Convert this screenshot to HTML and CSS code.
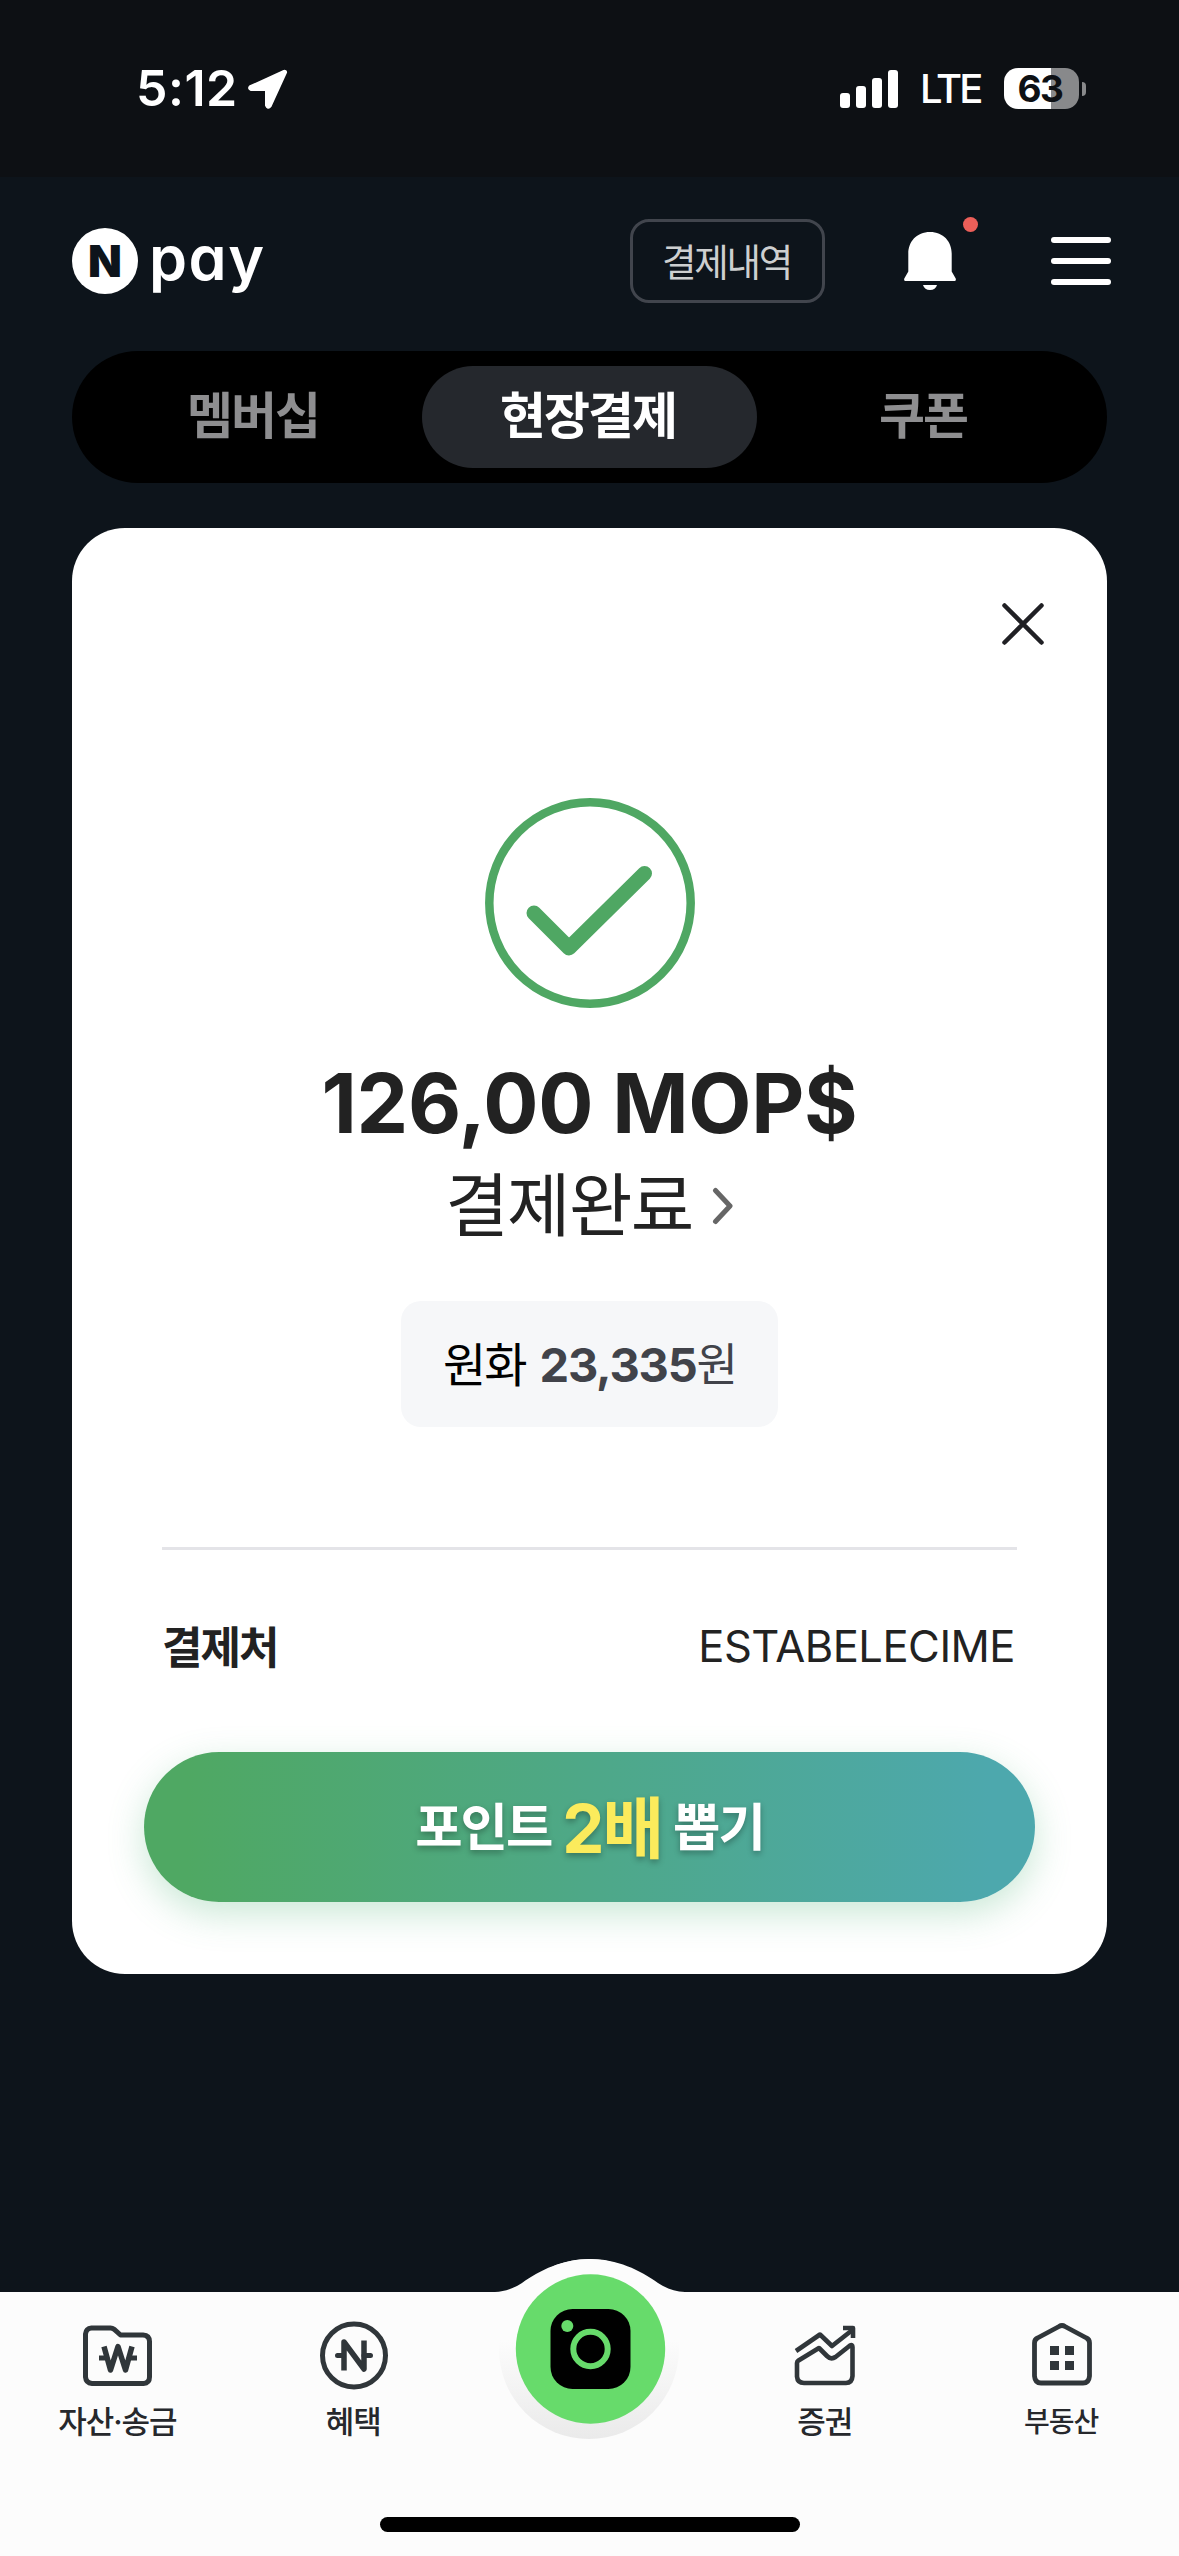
FILE: index.html
```html
<!DOCTYPE html>
<html lang="ko">
<head>
<meta charset="utf-8">
<title>N pay</title>
<link rel="stylesheet" href="styles.css">
</head>
<body>
<div class="screen">
  <div class="status">
    <span class="time">5:12</span>
    <svg class="loc" width="42" height="42" viewBox="0 0 42 42"><path d="M38.500 4.300 4.800 19.600Q4.300 20.200 5.500 20.600H21.500V37.200Q22.200 39 23.200 37.600Z" fill="#fff" stroke="#fff" stroke-width="5" stroke-linejoin="round"/></svg>
    <svg class="signal" width="58" height="38" viewBox="0 0 58 38" fill="#fff"><rect x="0" y="23" width="10" height="15" rx="3"/><rect x="16" y="16" width="10" height="22" rx="3"/><rect x="32" y="8" width="10" height="30" rx="3"/><rect x="48" y="0" width="10" height="38" rx="3"/></svg>
    <span class="lte">LTE</span>
    <span class="battery">63</span>
    <span class="nub"></span>
  </div>

  <header class="top">
    <span class="mark">N</span>
    <span class="pay">pay</span>
    <button class="history"><span>결제내역</span></button>
    <span class="bell">
      <svg width="52" height="59" viewBox="0 0 52 59" fill="#fff"><path d="M26 0C12.500 0 4.300 9.800 4.300 21.500V39.500L.3 46.500C-.2 48 .4 49 2 49H50C51.600 49 52.200 48 51.700 46.500L47.700 39.500V21.500C47.700 9.800 39.500 0 26 0Z"/><path d="M19 53H33Q31.500 58 26 58Q20.500 58 19 53Z"/></svg>
      <span class="dot"></span>
    </span>
    <span class="menu"><i></i><i></i><i></i></span>
  </header>

  <nav class="tabs">
    <span class="tab">멤버십</span>
    <span class="tab active">현장결제</span>
    <span class="tab">쿠폰</span>
  </nav>

  <main class="card">
    <svg class="close" width="42" height="42" viewBox="0 0 42 42" fill="none" stroke="#202024" stroke-width="4.500" stroke-linecap="round"><path d="M2.500 2.500 39.500 39.500M39.500 2.500 2.500 39.500"/></svg>
    <svg class="check" width="210" height="210" viewBox="0 0 210 210" fill="none" stroke="#4fa763"><circle cx="105" cy="105" r="100.700" stroke-width="8.500"/><path d="M49 115 84 150 159.500 75.500" stroke-width="15" stroke-linecap="round" stroke-linejoin="round"/></svg>
    <div class="amount">126,00 MOP$</div>
    <div class="done"><span>결제완료</span><svg width="22" height="40" viewBox="0 0 22 40" fill="none" stroke="#666" stroke-width="5" stroke-linecap="round" stroke-linejoin="round"><path d="M3.500 4.500 18 20 3.500 35.500"/></svg></div>
    <div class="won"><span class="won-label">원화</span><b>23,335</b><span class="unit">원</span></div>
    <div class="row"><b>결제처</b><span>ESTABELECIME</span></div>
    <button class="draw"><span>포인트</span><em>2배</em><span>뽑기</span></button>
  </main>

  <footer class="bottom">
    <svg class="bump" width="210" height="36" viewBox="0 0 210 36"><path d="M10 34C20 34 29 30 37 25C55 12 78 1 105 1C132 1 155 12 173 25C181 30 190 34 200 34V36H10Z" fill="#fcfcfc"/></svg>
    <a class="item">
      <svg width="72" height="72" viewBox="0 0 72 72" fill="none" stroke="#30363a" stroke-width="5" stroke-linejoin="round"><path d="M9.500 8H28.500Q30.500 8 32 9.200L38.500 15H61Q67.500 15.500 67.500 21.500V57Q67.500 63 61.500 63.500H10Q4 63 3.500 57V14Q4 8.500 9.500 8Z"/><path d="M22 26.500 28.500 50 36 26.500 43.500 50 50 26.500" stroke-width="5.500"/><path d="M17 38H23M48 38H55" stroke-width="5"/></svg>
      <span>자산·송금</span>
    </a>
    <a class="item">
      <svg width="72" height="72" viewBox="0 0 72 72" fill="none" stroke="#30363a" stroke-width="5" stroke-linejoin="round"><circle cx="36" cy="35.500" r="31.500"/><path d="M26 50.500V22L46 49V20.500" stroke-width="5.500"/><path d="M19.500 35.500H25M46 35.500H52.500" stroke-linecap="round"/></svg>
      <span>혜택</span>
    </a>
    <a class="scan">
      <svg width="180" height="180" viewBox="0 0 180 180"><circle cx="91.500" cy="90" r="74.700" fill="#67db6b"/><rect x="51.500" y="50" width="80" height="80" rx="22"/><circle cx="91.500" cy="90" r="17.200" fill="none" stroke="#67db6b" stroke-width="6"/><circle cx="68.300" cy="67" r="6" fill="#67db6b"/></svg>
    </a>
    <a class="item">
      <svg width="72" height="72" viewBox="0 0 72 72" fill="none" stroke="#30363a" stroke-width="4.600" stroke-linejoin="round"><path d="M7 31 31 14.500 43 26 64 9.500"/><path d="M54 8H64V18"/><path d="M8 43Q8 41.500 9.500 40.500L30 28L38 36Q42 40 46.500 37L61 25.500Q63.500 24 63.500 27V56Q63 63 57 63H15Q8.500 63 8 56.500Z"/></svg>
      <span>증권</span>
    </a>
    <a class="item">
      <svg width="72" height="72" viewBox="-1 0 72 72" fill="none" stroke="#30363a" stroke-width="4.800" stroke-linejoin="round"><path d="M33 6.500Q36 4.500 39 6.500L60.500 18Q63.500 19.500 63.500 23V56Q63 63 57 63H15Q9 63 8.500 56V23Q8.500 19.500 11.500 18Z"/><path d="M24 26h9v9h-9ZM39 26h9v9h-9ZM24 41h9v9h-9ZM39 41h9v9h-9Z" fill="#30363a" stroke="none"/></svg>
      <span class="small">부동산</span>
    </a>
    <span class="home"></span>
  </footer>
</div>
</body>
</html>
```
FILE: styles.css
```css
* { box-sizing: border-box; }
body {
  margin: 0;
  background: #0d141b;
  font-family: Inter, "Noto Sans CJK KR", sans-serif;
}
button { font-family: inherit; padding: 0; }
svg { display: block; flex: none; }
.screen {
  width: 1179px;
  height: 2556px;
  display: flex;
  flex-direction: column;
  overflow: hidden;
}

/* status bar */
.status {
  height: 177px;
  background: #0d1014;
  color: #fff;
  display: flex;
  align-items: center;
  padding-left: 136px;
}
.time { width: 110px; padding-bottom: 2px; font-size: 50px; font-weight: 600; letter-spacing: 0.5px; white-space: nowrap; }
.loc { margin-right: 552px; }
.signal { margin-right: 22px; }
.lte { width: 84px; font-size: 40px; font-weight: 500; letter-spacing: -2.800px; white-space: nowrap; }
.battery {
  width: 75px;
  height: 41px;
  border-radius: 14px;
  background: linear-gradient(90deg, #fff 47px, #88898b 47px);
  color: #0d1014;
  font-size: 37px;
  font-weight: 700;
  letter-spacing: -1.500px;
  line-height: 41px;
  padding-right: 3px;
  text-align: center;
}
.nub { width: 4px; height: 14px; margin-left: 3px; border-radius: 0 4px 4px 0; background: #88898b; }

/* header */
.top {
  height: 174px;
  padding: 0 68px 6px 72px;
  display: flex;
  align-items: center;
  color: #fff;
}
.mark {
  width: 66px;
  height: 66px;
  border-radius: 50%;
  background: #fff;
  color: #0d141b;
  font-size: 44px;
  font-weight: 900;
  line-height: 66px;
  text-align: center;
}
.pay {
  margin-left: 11px;
  font-size: 61px;
  font-weight: 600;
  letter-spacing: 1.500px;
  line-height: 64px;
  height: 70px;
  font-feature-settings: "cv11";
}
.history {
  width: 195px;
  height: 84px;
  margin-left: auto;
  border: 3px solid #41454d;
  border-radius: 19px;
  background: none;
  color: #cdcfd0;
  font-size: 37.500px;
  letter-spacing: -2.300px;
}
.history span { display: block; padding: 0 2px 4px 0; }
.bell { position: relative; margin: 0 95px 0 79px; }
.dot {
  position: absolute;
  left: 59px;
  top: -15px;
  width: 15px;
  height: 15px;
  border-radius: 50%;
  background: #ec5f59;
}
.menu { width: 60px; display: flex; flex-direction: column; gap: 15px; }
.menu i { height: 6px; border-radius: 3px; background: #fff; }

/* tabs */
.tabs {
  height: 132px;
  margin: 0 72px;
  padding: 15px;
  border-radius: 66px;
  background: #000;
  display: grid;
  grid-template-columns: repeat(3, 1fr);
}
.tab {
  padding-right: 3px;
  border-radius: 51px;
  color: #8e8e90;
  font-size: 50px;
  font-weight: 700;
  line-height: 101px;
  letter-spacing: -2px;
  text-align: center;
}
.active { background: #25282d; color: #fff; }

/* result card */
.card {
  height: 1446px;
  margin: 45px 72px 0;
  border-radius: 53px;
  background: #fff;
  color: #222;
  display: flex;
  flex-direction: column;
  align-items: center;
}
.close { align-self: flex-end; margin: 75px 63px 153px 0; }
.amount { margin-top: 46px; font-size: 82px; font-weight: 700; line-height: 100px; letter-spacing: -0.3px; white-space: nowrap; }
.done { display: flex; align-items: center; gap: 19px; height: 104px; }
.done span { font-size: 69px; line-height: 104px; letter-spacing: -1.600px; }
.won {
  width: 377px;
  height: 126px;
  margin-top: 43px;
  border-radius: 20px;
  background: #f6f7f9;
  display: flex;
  align-items: center;
  justify-content: center;
  font-size: 47px;
  color: #41434a;
  letter-spacing: -2px;
}
.won-label { color: #000; margin-right: 14px; padding-bottom: 5px; }
.won b { letter-spacing: -1.200px; }
.unit { font-size: 45px; padding-bottom: 5px; }
.row {
  width: 855px;
  height: 205px;
  margin-top: 120px;
  padding-bottom: 12px;
  border-top: 3px solid #e4e4e8;
  display: flex;
  justify-content: space-between;
  align-items: center;
  font-size: 43.500px;
  letter-spacing: -0.5px;
}
.row span { padding: 2px 2px 0 0; }
.row b { font-size: 44px; letter-spacing: -2px; }
.draw {
  width: 891px;
  height: 150px;
  border: 0;
  border-radius: 75px;
  background: linear-gradient(90deg, #4fa863 5%, #4da8ad 95%);
  box-shadow: 0 12px 36px rgba(79, 180, 120, .3);
  color: #fff;
  font-size: 51.500px;
  font-weight: 700;
  letter-spacing: -2px;
  text-shadow: 0 3px 6px rgba(0, 0, 0, .3);
  display: flex;
  justify-content: center;
  align-items: center;
  line-height: 148px;
  gap: 11px;
}
.draw em { padding-top: 4px; font-style: normal; font-size: 67px; color: #fbeb5c; }

/* bottom bar */
.bottom {
  position: relative;
  height: 264px;
  margin-top: auto;
  background: #fcfcfc;
  display: grid;
  grid-template-columns: repeat(5, 1fr);
}
.bump { position: absolute; left: 485px; top: -34px; }
.item {
  padding-top: 28px;
  display: flex;
  flex-direction: column;
  align-items: center;
  color: #26282c;
  font-size: 31px;
  font-weight: 500;
  line-height: 44px;
  letter-spacing: -1px;
}
.item span { margin-top: 8px; padding-right: 1px; }
.item .small { font-size: 28px; padding: 0; }
.scan {
  position: relative;
  width: 180px;
  height: 180px;
  margin: -33px auto 0;
  border-radius: 50%;
  background: linear-gradient(180deg, #fcfcfc 45%, #eaeaea);
}
.home {
  position: absolute;
  left: 380px;
  top: 225px;
  width: 420px;
  height: 15px;
  border-radius: 8px;
  background: #000;
}
```
